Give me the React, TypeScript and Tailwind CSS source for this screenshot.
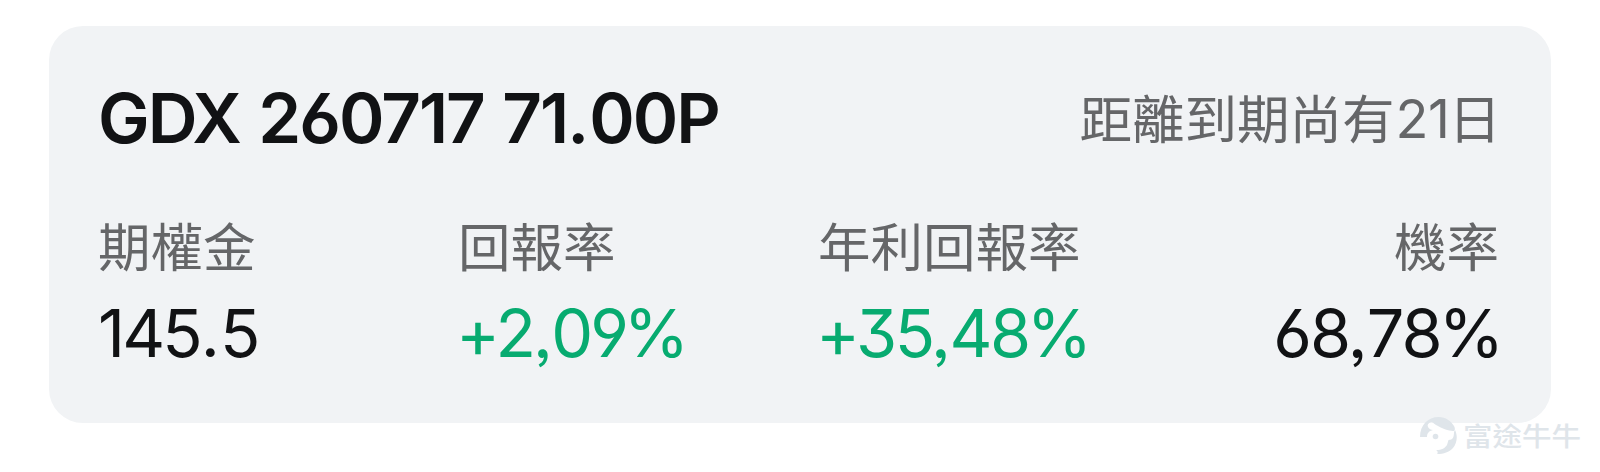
import React from 'react';

interface Metric {
  id: string;
  label: string;
  value: string;
  cell: string;
  tone: string;
}

const metrics: Metric[] = [{
  id: 'premium',
  label: '期權金',
  value: '145.5',
  cell: 'w-[360px] items-start',
  tone: 'text-[#111214] tracking-[-2.9px]'
}, {
  id: 'return',
  label: '回報率',
  value: '+2,09%',
  cell: 'w-[360px] items-start',
  tone: 'text-[#07ab70] tracking-[-3px]'
}, {
  id: 'annual',
  label: '年利回報率',
  value: '+35,48%',
  cell: 'flex-1 items-start',
  tone: 'text-[#07ab70] tracking-[-2.5px]'
}, {
  id: 'probability',
  label: '機率',
  value: '68,78%',
  cell: 'items-end',
  tone: 'text-[#111214] tracking-[-2px]'
}];

const digits = "font-['Inter',sans-serif] [font-feature-settings:'cv03','cv04','cv09','ss03']";
const caption = "font-['Inter','Noto_Sans_CJK_TC',sans-serif] font-normal text-[52.5px] text-[#656668]";

// Side bearings for the glyphs that sit looser or tighter than the digits
const bearings: Record<string, string> = {
  '.': 'ml-[1px] mr-[3px]',
  ',': 'mr-[2px]',
  '+': '-ml-[2px] -mr-[1.5px]',
  '%': '-ml-[2px] -mr-[1px]'
};

const Figure = ({ text }: { text: string }) => <>
    {text.split(/([.,+%])/).filter(Boolean).map((part, i) => <span key={i} className={bearings[part]}>{part}</span>)}
  </>;

const BullLogo = () => <svg width="37" height="37" viewBox="0 0 37 37" fill="#dfe5ea">
    <path d="M0 20C0 8 8 0 18.5 0C26 0 31 4 34 9C35.5 12 35 14 33 14C29 14 21 11 16 8C13 6 13 5 11 5C8 6 7 8 8 10C9 12 11 13 13 13C9 14 7 16 7 20Z" />
    <path d="M35 13C38 19 37 26 33 31C29 35 24 37 17 37C18 36 18 34 16 33C22 33 25 31 27 28L28.5 23C33 23 34 20 34 15Z" />
    <circle cx="15.5" cy="19.5" r="2.8" />
  </svg>;

export default function App() {
  return <div className="relative h-[472px] w-[1600px] overflow-hidden bg-white px-[49px] pt-[26px]">
      <div className="flex h-[397px] w-[1502px] flex-col rounded-[34px] bg-[#f1f3f5] pl-[49px] pr-[50px] pt-[54px]">
        <div className="flex h-[76px] items-center justify-between whitespace-nowrap">
          <h1 className={`${digits} text-[69px] leading-[76px] font-semibold tracking-[-2px] [word-spacing:3px] text-[#111214]`}>
            GDX 260717 71<span className="mr-[2px]">.</span>00P
          </h1>
          <span className={`${caption} pt-[4px] leading-[76px]`}>
            距離到期尚有<span className="relative -top-[1px] left-[1px] text-[54px] tracking-[-0.5px]">21</span>日
          </span>
        </div>
        <div className="mt-[54px] flex whitespace-nowrap">
          {metrics.map(metric => <div key={metric.id} className={`flex flex-col ${metric.cell}`}>
              <span className={`${caption} pr-[2px] leading-[76px]`}>{metric.label}</span>
              <span className={`${digits} mt-[5px] text-[66.5px] leading-[84px] font-normal ${metric.tone}`}>
                <Figure text={metric.value} />
              </span>
            </div>)}
        </div>
      </div>
      {/* Watermark over the card's corner */}
      <div className="absolute left-[1420px] top-[417px] flex h-[37px] items-center gap-[6px]">
        <BullLogo />
        <span className="-mt-[2px] scale-y-90 font-['Noto_Sans_CJK_TC',sans-serif] text-[29.5px] leading-[37px] font-medium text-[#dfe5ea]">
          富途牛牛
        </span>
      </div>
    </div>;
}
